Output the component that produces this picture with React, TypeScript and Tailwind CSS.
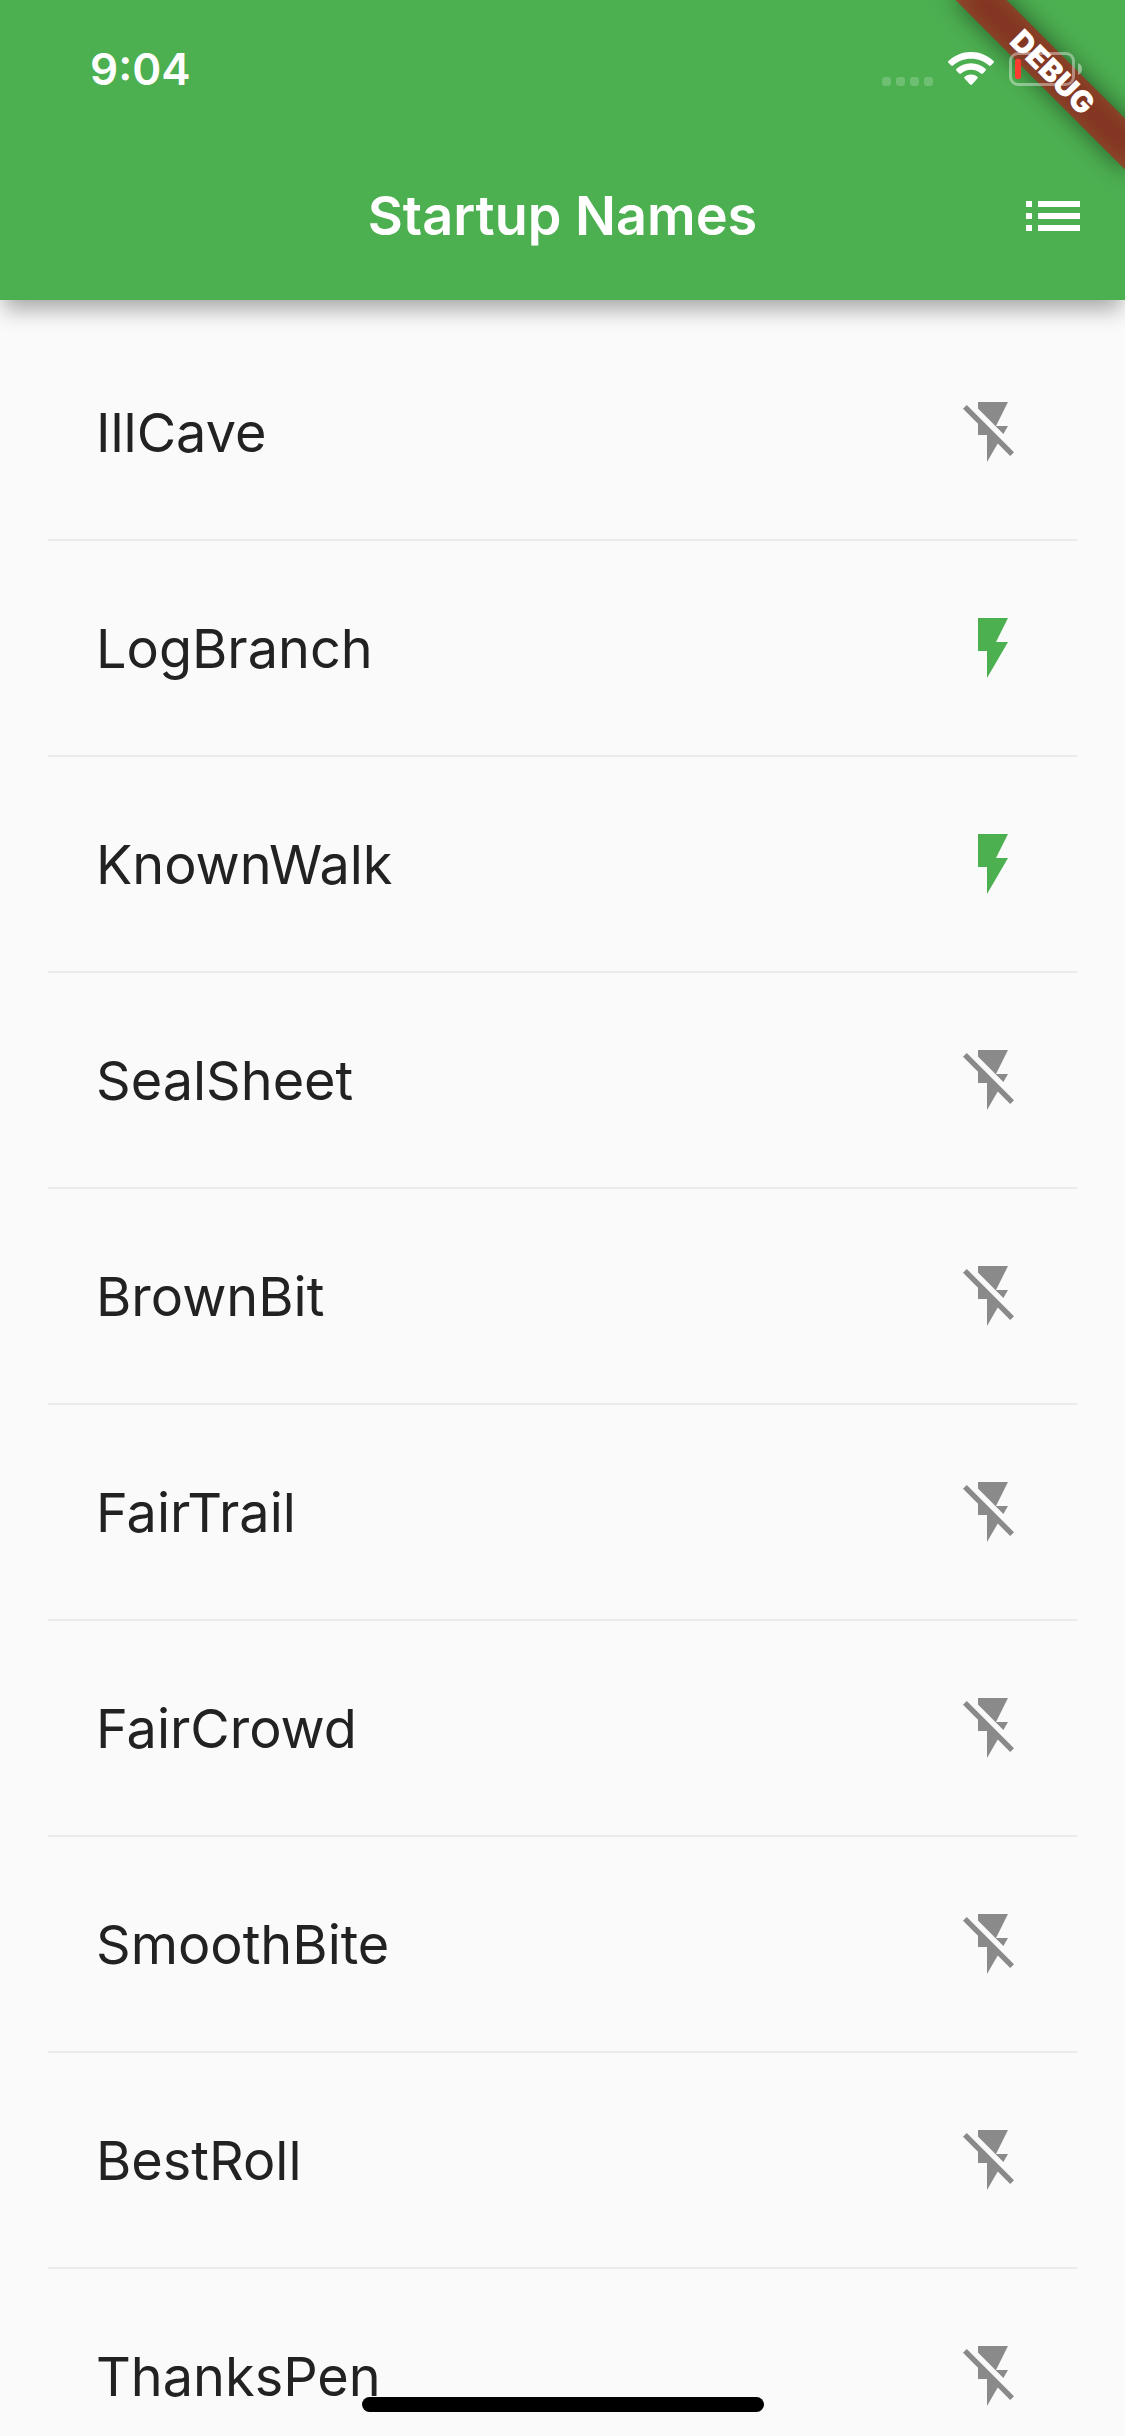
import { useState } from 'react';

const startupNames = [
  'IllCave',
  'LogBranch',
  'KnownWalk',
  'SealSheet',
  'BrownBit',
  'FairTrail',
  'FairCrowd',
  'SmoothBite',
  'BestRoll',
  'ThanksPen',
];

function FlashOnIcon() {
  return (
    <svg viewBox="0 0 24 24" className="size-18 shrink-0 fill-[#4CAF50]" aria-hidden="true">
      <path d="M7 2v11h3v9l7-12h-4l4-8z" />
    </svg>
  );
}

function FlashOffIcon() {
  return (
    <svg viewBox="0 0 24 24" className="size-18 shrink-0 fill-[#8A8A8A]" aria-hidden="true">
      <path d="M3.27 3L2 4.27l5 5V13h3v9l3.58-6.14L17.73 20 19 18.73 3.27 3zM17 10h-4l4-8H7v2.18l8.46 8.46L17 10z" />
    </svg>
  );
}

function ListIcon() {
  return (
    <svg viewBox="0 0 24 24" className="size-18 fill-white" aria-hidden="true">
      <path d="M3 13h2v-2H3v2zm0 4h2v-2H3v2zm0-8h2V7H3v2zm4 4h14v-2H7v2zm0 4h14v-2H7v2zM7 7v2h14V7H7z" />
    </svg>
  );
}

function WifiIcon() {
  return (
    <svg viewBox="0 0 46 34" className="h-[34px] w-[46px]" fill="white" aria-label="Wi-Fi" role="img">
      <path d="M23 0C14.2 0 6.300 3.400.5 8.900a1.300 1.300 0 0 0 0 1.900l2.700 2.700c.5.500 1.300.500 1.800 0C9.700 9.100 16 6.700 23 6.700s13.300 2.400 18 6.800c.5.500 1.300.500 1.800 0l2.700-2.700a1.300 1.300 0 0 0 0-1.900C39.700 3.400 31.800 0 23 0z" />
      <path d="M23 11.200c-5.600 0-10.700 2.100-14.500 5.600a1.300 1.300 0 0 0 0 1.900l2.700 2.700c.5.500 1.300.500 1.800 0 2.600-2.300 6.100-3.700 10-3.700s7.400 1.400 10 3.700c.5.500 1.300.500 1.800 0l2.700-2.700a1.300 1.300 0 0 0 0-1.900c-3.800-3.500-8.900-5.600-14.500-5.600z" />
      <path d="M23 22.600c-2.400 0-4.600.8-6.300 2.200-.6.500-.6 1.200-.1 1.700l5.500 5.900c.5.600 1.300.6 1.800 0l5.500-5.900c.5-.5.500-1.200-.1-1.700-1.700-1.400-3.900-2.200-6.300-2.200z" />
    </svg>
  );
}

function BatteryIcon() {
  return (
    <svg viewBox="0 0 73 34" className="h-[34px] w-[73px]" aria-label="Battery low" role="img">
      <rect x="1.500" y="1.500" width="63" height="31" rx="7.500" fill="none" stroke="white" strokeOpacity="0.4" strokeWidth="3" />
      <path d="M69 11c2.500 1 4 3.300 4 6s-1.500 5-4 6z" fill="white" fillOpacity="0.45" />
      <rect x="6" y="7" width="6" height="20" rx="2.500" fill="#FF3B30" />
    </svg>
  );
}

function SignalDots() {
  return (
    <div className="flex gap-[5px]">
      {[0, 1, 2, 3].map((dot) => (
        <span key={dot} className="size-[9px] rounded-[3px] bg-white/20" />
      ))}
    </div>
  );
}

function DebugBanner() {
  return (
    <div className="pointer-events-none absolute top-0 right-0 flex size-36 items-center justify-center">
      <div className="relative h-9 w-60 shrink-0 rotate-45">
        <div className="absolute inset-0 bg-black/50 blur-[12px]" />
        <div className="relative flex h-full items-center justify-center bg-[#B71C1C]/63 text-[30px] leading-9 font-black text-white">
          DEBUG
        </div>
      </div>
    </div>
  );
}

export default function App() {
  const [saved, setSaved] = useState<string[]>(['LogBranch', 'KnownWalk']);

  const toggle = (name: string) =>
    setSaved((current) =>
      current.includes(name) ? current.filter((item) => item !== name) : [...current, name],
    );

  return (
    <div className="relative flex h-screen flex-col overflow-hidden bg-[#FAFAFA] font-['Inter','Liberation_Sans',sans-serif]">
      <header className="relative z-10 bg-[#4CAF50] text-white shadow-[0_14px_20px_-4px_rgba(0,0,0,0.32)]">
        <DebugBanner />
        <div className="relative flex h-33 items-start justify-between pr-[43px] pl-[90px]">
          <time className="pt-[42px] text-[44px] leading-[54px] font-semibold">9:04</time>
          <div className="flex items-end gap-[15px] pt-[52px]">
            <SignalDots />
            <WifiIcon />
            <BatteryIcon />
          </div>
        </div>
        <div className="grid h-42 grid-cols-[1fr_auto_1fr] items-center px-9">
          <h1 className="col-start-2 text-[54px] leading-[72px] font-semibold">Startup Names</h1>
          <button type="button" aria-label="Saved suggestions" className="justify-self-end">
            <ListIcon />
          </button>
        </div>
      </header>

      <ul className="min-h-0 flex-1 overflow-y-auto px-12 pt-12 [scrollbar-width:none]">
        {startupNames.map((name, index) => (
          <li key={name}>
            {index > 0 && (
              <div className="flex h-12 items-center">
                <div className="h-[2px] w-full bg-[#EBEBEB]" />
              </div>
            )}
            <button
              type="button"
              aria-pressed={saved.includes(name)}
              onClick={() => toggle(name)}
              className="flex h-42 w-full items-center justify-between px-12 text-left"
            >
              <span className="pt-[2px] text-[54px] leading-[72px] text-[#222222]">{name}</span>
              {saved.includes(name) ? <FlashOnIcon /> : <FlashOffIcon />}
            </button>
          </li>
        ))}
      </ul>

      <div className="absolute inset-x-0 bottom-6 z-20 mx-auto h-[15px] w-[402px] rounded-full bg-black" />
    </div>
  );
}
